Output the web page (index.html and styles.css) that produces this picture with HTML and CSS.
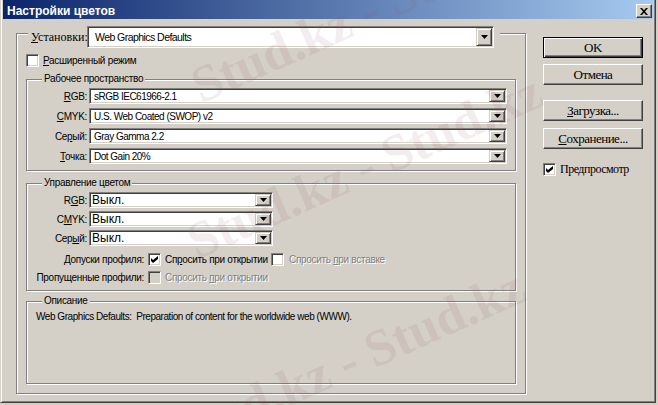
FILE: index.html
```html
<!DOCTYPE html>
<html lang="ru">
<head>
<meta charset="utf-8">
<title>Настройки цветов</title>
<link rel="stylesheet" href="styles.css">
</head>
<body>
<div class="window">
  <div class="titlebar">
    <span class="title">Настройки цветов</span>
    <span class="close"><svg width="8" height="7" viewBox="0 0 8 7"><path d="M0 0h2l2 2.2L6 0h2L5 3.5 8 7H6L4 4.8 2 7H0l3-3.5z"/></svg></span>
  </div>
  <div class="client">
    <div class="main etched">
      <div class="main-head">
        <span class="serif head-label"><u>У</u>становки:</span>
        <div class="field big">
          <span class="field-text">Web Graphics Defaults</span>
          <span class="drop"><svg width="7" height="4" viewBox="0 0 7 4"><path d="M0 0h7L3.5 4z"/></svg></span>
        </div>
      </div>
      <div class="check-row">
        <span class="cb"></span>
        <span class="cb-text"><u>Р</u>асширенный режим</span>
      </div>

      <div class="group etched g-work">
        <div class="legend">Рабочее пространство</div>
        <div class="row"><span class="lbl"><u>R</u>GB:</span><div class="field wide"><span class="field-text">sRGB IEC61966-2.1</span><span class="drop"><svg width="7" height="4" viewBox="0 0 7 4"><path d="M0 0h7L3.5 4z"/></svg></span></div></div>
        <div class="row"><span class="lbl"><u>C</u>MYK:</span><div class="field wide"><span class="field-text">U.S. Web Coated (SWOP) v2</span><span class="drop"><svg width="7" height="4" viewBox="0 0 7 4"><path d="M0 0h7L3.5 4z"/></svg></span></div></div>
        <div class="row"><span class="lbl">Се<u>р</u>ый:</span><div class="field wide"><span class="field-text">Gray Gamma 2.2</span><span class="drop"><svg width="7" height="4" viewBox="0 0 7 4"><path d="M0 0h7L3.5 4z"/></svg></span></div></div>
        <div class="row"><span class="lbl"><u>Т</u>очка:</span><div class="field wide"><span class="field-text">Dot Gain 20%</span><span class="drop"><svg width="7" height="4" viewBox="0 0 7 4"><path d="M0 0h7L3.5 4z"/></svg></span></div></div>
      </div>

      <div class="group etched g-manage">
        <div class="legend">Управление цветом</div>
        <div class="row tight"><span class="lbl">R<u>G</u>B:</span><div class="field narrow"><span class="field-text large">Выкл.</span><span class="drop"><svg width="7" height="4" viewBox="0 0 7 4"><path d="M0 0h7L3.5 4z"/></svg></span></div></div>
        <div class="row tight"><span class="lbl">C<u>M</u>YK:</span><div class="field narrow"><span class="field-text large">Выкл.</span><span class="drop"><svg width="7" height="4" viewBox="0 0 7 4"><path d="M0 0h7L3.5 4z"/></svg></span></div></div>
        <div class="row tight"><span class="lbl">Сер<u>ы</u>й:</span><div class="field narrow"><span class="field-text large">Выкл.</span><span class="drop"><svg width="7" height="4" viewBox="0 0 7 4"><path d="M0 0h7L3.5 4z"/></svg></span></div></div>
        <div class="crow first">
          <span class="clbl">Допуски профиля:</span>
          <span class="cb checked"><svg width="7" height="7" viewBox="0 0 7 7"><path d="M0 2l2 2 5-4v3L2 7 0 5z"/></svg></span>
          <span class="ctext">Сп<u>р</u>осить при открытии</span>
          <span class="cb"></span>
          <span class="ctext second disabled">Спросить <u>п</u>ри вставке</span>
        </div>
        <div class="crow">
          <span class="clbl">Пропущенные профили:</span>
          <span class="cb off"></span>
          <span class="ctext disabled">Спросить <u>п</u>ри открытии</span>
        </div>
      </div>

      <div class="group etched g-desc">
        <div class="legend">Описание</div>
        <p class="desc">Web Graphics Defaults:&nbsp; Preparation of content for the worldwide web (WWW).</p>
      </div>
    </div>

    <div class="side">
      <button class="btn default">OK</button>
      <button class="btn b-cancel">Отмена</button>
      <button class="btn b-load"><u>З</u>агрузка...</button>
      <button class="btn b-save"><u>С</u>охранение...</button>
      <div class="preview">
        <span class="cb checked"><svg width="7" height="7" viewBox="0 0 7 7"><path d="M0 2l2 2 5-4v3L2 7 0 5z"/></svg></span>
        <span class="serif pv-text">Пре<u>д</u>просмотр</span>
      </div>
    </div>
  </div>
</div>

<div class="wm-layer" aria-hidden="true">
  <div class="wm wm1">Stud.kz - Stud.kz</div>
  <div class="wm wm2">Stud.kz - Stud.kz</div>
  <div class="wm wm3">Stud.kz - Stud.kz</div>
</div>
</body>
</html>
```

FILE: styles.css
```css
* { box-sizing: border-box; margin: 0; padding: 0; }
html, body { width: 658px; height: 405px; overflow: hidden; }
body {
  background: #d4d0c8;
  font-family: "Liberation Sans", Arial, sans-serif;
  font-size: 10px;
  letter-spacing: -0.3px;
  color: #000;
  position: relative;
}
u { text-decoration: underline; text-underline-offset: 1px; }
.serif { font-family: "Liberation Serif", "Times New Roman", serif; }

.window {
  width: 656px;
  height: 403px;
  border-left: 1px solid #d4d0c8;
  border-right: 1px solid #404040;
  border-bottom: 1px solid #404040;
  box-shadow: inset 1px 0 #fff, inset -1px -1px #808080;
  padding: 0 2px 2px 2px;
  display: flex;
  flex-direction: column;
}

.titlebar {
  height: 19px;
  background: linear-gradient(to right, #0a246a, #a6caf0);
  display: flex;
  align-items: flex-start;
  justify-content: space-between;
  padding-left: 4px;
}
.title {
  color: #fff;
  font-weight: bold;
  font-size: 12px;
  letter-spacing: 0;
  line-height: 16px;
  padding-top: 3px;
}
.close {
  width: 16px;
  height: 14px;
  margin: 4px 1px 0 0;
  background: #d4d0c8;
  border: 1px solid;
  border-color: #fff #404040 #404040 #fff;
  box-shadow: inset -1px -1px #808080;
  display: flex;
  align-items: center;
  justify-content: center;
  padding-right: 1px;
}
.close svg { display: block; }

.client {
  display: flex;
  padding: 14px 0 0 13px;
}

.etched {
  border: 1px solid #808080;
  box-shadow: inset 1px 1px #fff, 1px 1px #fff;
}

.main {
  width: 510px;
  height: 361px;
  display: flex;
  flex-direction: column;
  padding-left: 9px;
}

.main-head {
  display: flex;
  align-items: center;
  align-self: flex-start;
  margin: -8px 0 0 2px;
  padding: 0 6px 0 3px;
  background: #d4d0c8;
}
.head-label { width: 56px; font-size: 12px; letter-spacing: 0; }

.field {
  background: #fff;
  border: 1px solid;
  border-color: #808080 #fff #fff #808080;
  box-shadow: inset 1px 1px #404040, inset -1px -1px #d4d0c8;
  padding: 1px;
  display: flex;
  align-items: stretch;
}
.field.big { width: 407px; height: 22px; }
.field.wide { width: 418px; height: 16px; margin-left: 2px; }
.field.narrow { width: 184px; height: 16px; margin-left: 2px; }
.field-text {
  flex: 1;
  display: flex;
  align-items: center;
  padding-left: 3px;
  white-space: nowrap;
  overflow: hidden;
  letter-spacing: -0.5px;
}
.big .field-text { font-size: 10.5px; letter-spacing: -0.55px; padding-left: 6px; }
.field-text.large { font-size: 12px; letter-spacing: 0; padding-left: 1px; }

.drop {
  width: 16px;
  background: #d4d0c8;
  border: 1px solid;
  border-color: #d4d0c8 #404040 #404040 #d4d0c8;
  box-shadow: inset 1px 1px #fff, inset -1px -1px #808080;
  display: flex;
  align-items: center;
  justify-content: center;
}
.drop svg { display: block; }

.check-row {
  display: flex;
  align-items: center;
  margin-top: 6px;
  height: 13px;
}
.cb {
  width: 13px;
  height: 13px;
  flex: none;
  background: #fff;
  border: 1px solid;
  border-color: #808080 #fff #fff #808080;
  box-shadow: inset 1px 1px #404040, inset -1px -1px #d4d0c8;
  display: flex;
  align-items: center;
  justify-content: center;
}
.cb.off { background: #d4d0c8; }
.cb svg { display: block; }
.cb-text { margin-left: 4px; }

.group {
  width: 490px;
  display: flex;
  flex-direction: column;
}
.g-work { height: 92px; margin-top: 12px; }
.g-manage { height: 108px; margin-top: 12px; }
.g-desc { height: 83px; margin-top: 10px; }

.legend {
  align-self: flex-start;
  margin: -7px 0 0 15px;
  padding: 0 2px;
  line-height: 12px;
  background: #d4d0c8;
}

.row {
  display: flex;
  align-items: center;
  height: 16px;
  margin-top: 4px;
}
.legend + .row { margin-top: 3px; }
.row.tight { margin-top: 3px; }
.lbl { width: 60px; text-align: right; }

.crow {
  display: flex;
  align-items: center;
  height: 13px;
  margin-top: 5px;
}
.crow.first { margin-top: 7px; }
.clbl { width: 117px; flex: none; text-align: right; margin-right: 4px; }
.ctext { margin-left: 4px; width: 106px; flex: none; white-space: nowrap; }
.ctext.second { margin-left: 5px; width: auto; }
.ctext.disabled { color: #808080; text-shadow: 1px 1px #fff; }

.desc { margin: 4px 0 0 9px; line-height: 12px; white-space: nowrap; letter-spacing: -0.45px; }

.side {
  width: 100px;
  margin-left: 17px;
  padding-top: 4px;
  display: flex;
  flex-direction: column;
}
.btn {
  height: 21px;
  width: 100px;
  background: #d4d0c8;
  border: 1px solid;
  border-color: #fff #404040 #404040 #fff;
  box-shadow: inset -1px -1px #808080;
  font-family: "Liberation Serif", "Times New Roman", serif;
  font-size: 13px;
  letter-spacing: -0.5px;
  color: #000;
  line-height: 17px;
}
.btn.default {
  border-color: #000;
  box-shadow: inset 1px 1px #fff, inset -1px -1px #404040, inset -2px -2px #808080;
}
.b-cancel { margin-top: 6px; }
.b-load { margin-top: 15px; }
.b-save { margin-top: 7px; }

.preview {
  display: flex;
  align-items: center;
  margin-top: 14px;
  height: 13px;
}
.pv-text { margin-left: 4px; font-size: 12px; letter-spacing: -0.5px; }

.wm-layer {
  position: absolute;
  left: 0;
  top: 0;
  width: 658px;
  height: 405px;
  overflow: hidden;
  pointer-events: none;
}
.wm {
  position: absolute;
  white-space: nowrap;
  font-family: "Liberation Serif", serif;
  font-weight: bold;
  font-size: 52px;
  line-height: 52px;
  letter-spacing: 0;
  color: rgba(150, 80, 80, 0.1);
  transform-origin: left bottom;
}
.wm1 { left: 205px; top: 60px; transform: rotate(-24deg); }
.wm2 { left: 201px; top: 216px; transform: rotate(-24deg); }
.wm3 { left: 184px; top: 340px; transform: translateY(71px) rotate(-24deg); }
```
